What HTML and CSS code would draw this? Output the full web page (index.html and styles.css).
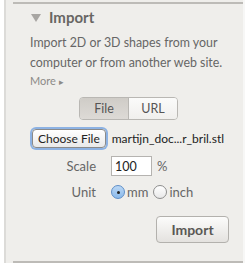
FILE: index.html
```html
<!DOCTYPE html>
<html lang="en">
<head>
  <meta charset="UTF-8" />
  <title>Import</title>
  <link rel="stylesheet" href="styles.css">
</head>
<body>
  <div class="panel">
    <div class="panel-head">
      <span class="arrow"></span>
      <h2>Import</h2>
    </div>

    <p class="desc">Import 2D or 3D shapes from your computer or from another web site.</p>
    <a class="more" href="#">More <span class="more-arrow">&#9656;</span></a>

    <div class="segments">
      <button class="seg active">File</button>
      <button class="seg">URL</button>
    </div>

    <div class="file-row">
      <button class="choose">Choose File</button>
      <span class="filename">martijn_doc...r_bril.stl</span>
    </div>

    <div class="field">
      <label class="field-label">Scale</label>
      <input class="scale" type="text" value="100" />
      <span class="unit-sign">%</span>
    </div>

    <div class="field">
      <label class="field-label">Unit</label>
      <span class="radio checked"></span><span class="radio-text">mm</span>
      <span class="radio"></span><span class="radio-text">inch</span>
    </div>

    <div class="actions">
      <button class="import-btn">Import</button>
    </div>
  </div>
</body>
</html>
```

FILE: styles.css
```css
body {
  margin: 0;
  background-color: #ffffff;
  font-family: 'Lato', sans-serif;
  color: #5f5f5f;
}

.panel {
  width: 241px;
  height: 263px;
  margin-left: 4px;
  box-sizing: border-box;
  background-color: #efeeeb;
  border-left: 2px solid #dcdbd8;
  border-right: 2px solid #f7f7f6;
  position: relative;
  padding: 7px 0 0 24px;
}

.panel::before,
.panel::after {
  content: "";
  position: absolute;
  left: 7px;
  right: 0;
  height: 2px;
  background-color: #bdbbb7;
}

.panel::before { top: 2px; }
.panel::after { bottom: 0; }

.panel-head {
  display: flex;
  align-items: center;
  height: 20px;
}

.arrow {
  width: 0;
  height: 0;
  border-left: 5px solid transparent;
  border-right: 5px solid transparent;
  border-top: 8px solid #a8a6a3;
  margin: 1px 8px 0 1px;
}

.panel-head h2 {
  margin: 0;
  font-size: 15px;
  font-weight: 700;
  color: #686663;
}

.desc {
  margin: 6px 0 0;
  width: 205px;
  font-size: 12.4px;
  line-height: 20px;
  color: #666;
}

.more {
  display: block;
  font-size: 11px;
  line-height: 14px;
  color: #8c8a87;
  text-decoration: none;
  margin-top: 1px;
}

.more-arrow {
  font-size: 9px;
}

.segments {
  display: flex;
  width: 97px;
  margin: 8px 0 0 49px;
  border: 1px solid #b9b7b3;
  border-radius: 4px;
  overflow: hidden;
}

.seg {
  flex: 1;
  height: 21px;
  border: none;
  padding: 0;
  font-family: inherit;
  font-size: 12.5px;
  color: #555;
  background: linear-gradient(#fbfbfa, #f0efed);
}

.seg.active {
  background: linear-gradient(#cfccc7, #dddad6);
  border-right: 1px solid #b9b7b3;
}

.file-row {
  display: flex;
  align-items: center;
  gap: 6px;
  margin: 9px 0 0 2px;
}

.choose {
  height: 19px;
  padding: 0 5px;
  font-family: 'Lato', sans-serif;
  font-size: 12px;
  color: #222;
  background: linear-gradient(#ffffff, #e9e9e9);
  border: 1px solid #8a8a8a;
  border-radius: 4px;
  box-shadow: 0 0 0 2px #8db2e3;
}

.filename {
  font-size: 12px;
  color: #222;
}

.field {
  display: flex;
  align-items: center;
  margin-top: 8px;
  font-size: 13px;
  color: #666;
}

.field-label {
  width: 66px;
  text-align: right;
  margin-right: 15px;
}

.scale {
  width: 33px;
  height: 16px;
  padding: 1px 3px;
  border: 1px solid #b5b3b0;
  background-color: #ffffff;
  font-family: 'Lato', sans-serif;
  font-size: 12.5px;
  color: #222;
}

.unit-sign {
  margin-left: 5px;
}

.radio {
  width: 14px;
  height: 14px;
  border-radius: 50%;
  border: 1px solid #8d8d8d;
  background: linear-gradient(#ffffff, #e8e8e8);
  box-sizing: border-box;
  position: relative;
}

.radio.checked {
  background: linear-gradient(#bcd8f5, #8ab9ea);
  border-color: #5f8fc7;
}

.radio.checked::after {
  content: "";
  position: absolute;
  left: 4.5px;
  top: 4.5px;
  width: 3px;
  height: 3px;
  border-radius: 50%;
  background-color: #222;
}

.radio-text {
  margin: 0 5px 0 2px;
}

.actions {
  display: flex;
  justify-content: flex-end;
  margin: 16px 14px 0 0;
}

.import-btn {
  width: 73px;
  height: 27px;
  font-family: inherit;
  font-size: 14px;
  font-weight: 700;
  color: #5a5855;
  background: linear-gradient(#fcfcfb, #e4e2df);
  border: 1px solid #b3b1ad;
  border-radius: 4px;
}
```
